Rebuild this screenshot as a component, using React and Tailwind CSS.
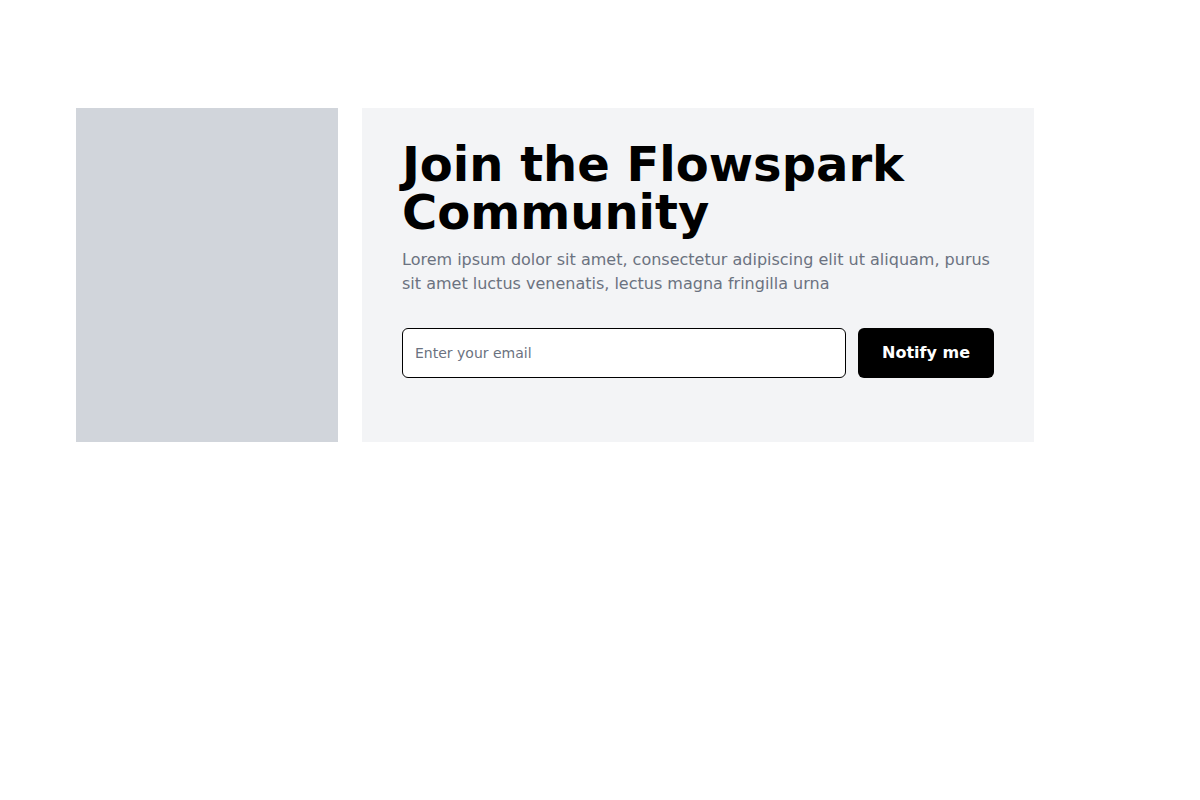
import React from 'react';

const App = () => {
    return (
        <div className="min-h-[800px] bg-white pt-[108px] pl-[76px]" style={{ fontFamily: '"DejaVu Sans", sans-serif' }}>
            <div className="flex gap-6 items-stretch">
                <div className="w-[262px] h-[334px] bg-[#d1d5db] shrink-0" />
                <div className="w-[672px] bg-[#f3f4f6] px-10 pt-8 pb-16">
                    <h1 className="text-5xl leading-none font-bold text-black">Join the Flowspark Community</h1>
                    <p className="mt-3 text-base leading-6 text-[#6b7280]">
                        Lorem ipsum dolor sit amet, consectetur adipiscing elit ut aliquam, purus sit amet luctus venenatis, lectus magna fringilla urna
                    </p>
                    <form className="mt-8 flex gap-3" onSubmit={(e) => e.preventDefault()}>
                        <input
                            type="email"
                            placeholder="Enter your email"
                            className="flex-1 h-[50px] px-3 bg-white border border-black rounded-md text-sm text-black placeholder:text-[#6b7280] outline-none"
                        />
                        <button type="submit" className="w-[136px] h-[50px] bg-black text-white font-bold text-base rounded-md">
                            Notify me
                        </button>
                    </form>
                </div>
            </div>
        </div>
    );
};

export default App;
